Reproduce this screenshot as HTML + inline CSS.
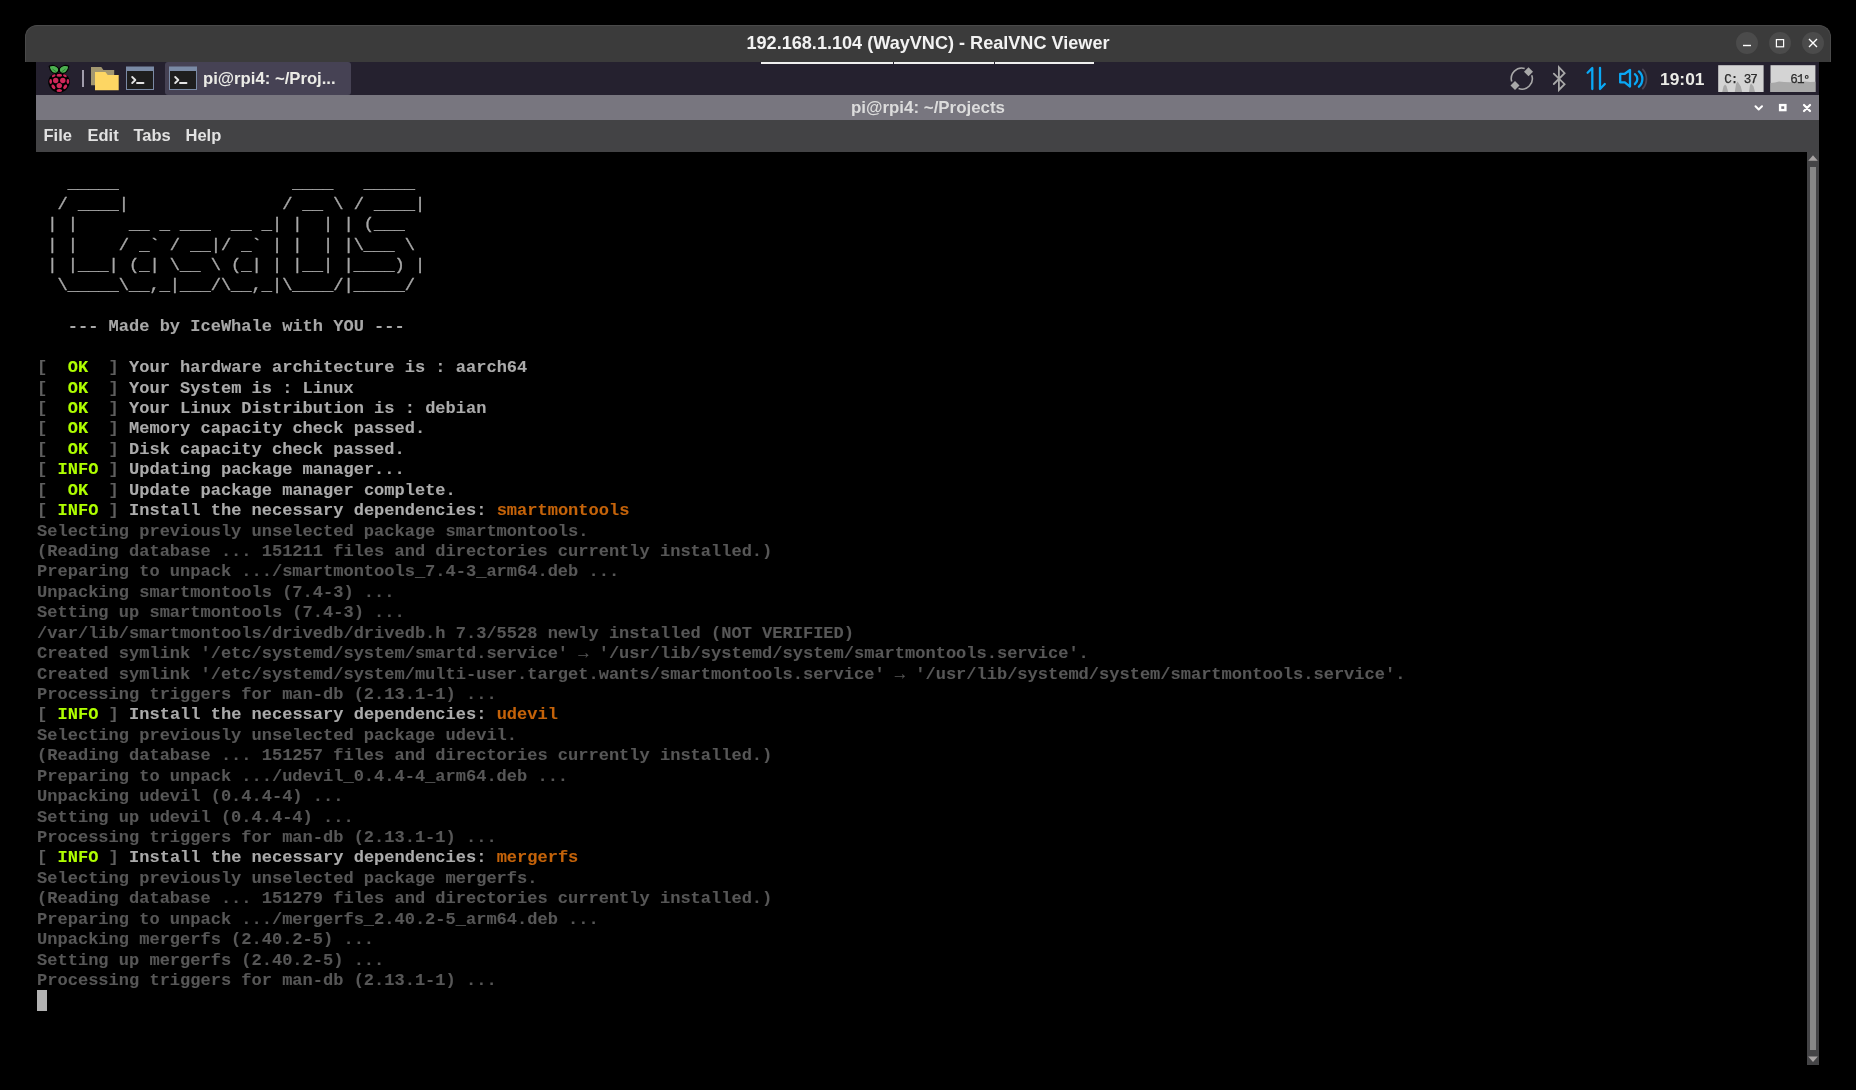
<!DOCTYPE html>
<html>
<head>
<meta charset="utf-8">
<style>
html,body{margin:0;padding:0;background:#000;}
body{width:1856px;height:1090px;overflow:hidden;position:relative;will-change:transform;font-family:"Liberation Sans",sans-serif;}
.abs{position:absolute;}
#vnctitle{left:25px;top:25px;width:1806px;height:37px;background:#3b3b3b;border-radius:12px 12px 0 0;box-sizing:border-box;border:1px solid #4a4a4a;border-bottom:none;}
#vnctext{left:0;width:1856px;top:32px;text-align:center;color:#f2f2f2;font-weight:bold;font-size:18.1px;line-height:22px;white-space:pre;}
.wbtn{width:22px;height:22px;border-radius:50%;background:#4b4b4b;top:32px;}
.ind{top:62px;height:2px;background:#f0f0f0;}
#panel{left:36px;top:62px;width:1783px;height:33px;background:#25212f;}
#ttitle{left:36px;top:95px;width:1783px;height:25px;background:#78767f;}
#ttext{left:0;width:1856px;top:97px;text-align:center;color:#dcdcdc;font-weight:bold;font-size:16.9px;line-height:22px;white-space:pre;}
#menubar{left:36px;top:120px;width:1783px;height:32px;background:#434345;}
.menu{top:124px;color:#e2e2e2;font-weight:bold;font-size:16.5px;line-height:22px;}
#term{left:36px;top:152px;width:1771px;height:913px;background:#000;}
.r{position:absolute;left:37.1px;font-family:"Liberation Mono",monospace;font-size:17.02px;line-height:20.43px;height:20.43px;white-space:pre;}
#sb{left:1807px;top:152px;width:12px;height:913px;background:#444446;}
#thumb{left:1809.6px;top:166.6px;width:6.8px;height:883.4px;background:#878787;}
#task{left:165px;top:62px;width:186px;height:33px;background:#464254;border-radius:3px;}
#tasktext{left:203px;top:68px;color:#ebebe6;font-weight:bold;font-size:16.7px;line-height:22px;white-space:pre;}
#clock{left:1660px;top:68px;color:#ebebe6;font-weight:bold;font-size:17.4px;line-height:22px;white-space:pre;}
.mon{top:65px;height:27px;width:45px;background:#d4d4d4;overflow:hidden;}
.montext{font-family:"Liberation Mono",monospace;font-size:13px;color:#2a2a2a;line-height:14px;white-space:pre;}
</style>
</head>
<body>
<!-- VNC viewer title bar -->
<div id="vnctitle" class="abs"></div>
<div id="vnctext" class="abs">192.168.1.104 (WayVNC) - RealVNC Viewer</div>
<div class="abs wbtn" style="left:1736px"></div>
<div class="abs wbtn" style="left:1769px"></div>
<div class="abs wbtn" style="left:1802px"></div>
<svg class="abs" style="left:1720px;top:25px" width="110" height="37" viewBox="0 0 110 37">
  <line x1="23" y1="20.5" x2="31" y2="20.5" stroke="#fff" stroke-width="1.4"/>
  <rect x="56.4" y="14.6" width="7.2" height="7.2" fill="none" stroke="#fff" stroke-width="1.2"/>
  <path d="M89 14 L97 22 M97 14 L89 22" stroke="#fff" stroke-width="1.4"/>
</svg>

<!-- Panel -->
<div id="panel" class="abs"></div>
<div id="task" class="abs"></div>
<div id="tasktext" class="abs">pi@rpi4: ~/Proj...</div>
<div id="clock" class="abs">19:01</div>
<svg class="abs" style="left:1718px;top:65px" width="46" height="27" viewBox="1718 65 46 27">
  <rect x="1718.2" y="65.2" width="45.4" height="26.8" fill="#d4d4d4"/>
  <path d="M1722.2 92 L1723.5 86.5 L1725 84.6 L1726.5 86 L1728.2 92 Z" fill="#a9a9a9"/>
  <path d="M1734.8 92 L1736 84 L1737.6 81.5 L1739.5 84.5 L1740.8 86.5 L1742.2 92 Z" fill="#a9a9a9"/>
  <path d="M1749 92 L1750 85 L1751.2 83.5 L1753.5 86.5 L1755 92 Z" fill="#a9a9a9"/>
  <text x="1724.3" y="82.9" font-family="Liberation Mono" font-size="12.6" letter-spacing="-1.05" fill="#2b2b2b" stroke="#2b2b2b" stroke-width="0.25" xml:space="preserve">C: 37</text>
</svg>
<svg class="abs" style="left:1770px;top:65px" width="46" height="27" viewBox="1770 65 46 27">
  <rect x="1770.5" y="65.2" width="44.9" height="26.8" fill="#d4d4d4"/>
  <path d="M1770.4 92 L1770.4 83 L1775 82.4 L1779 81.6 L1784 81.9 L1790 82.3 L1795 81.5 L1797 80.4 L1799 82 L1805 81.6 L1810 82.1 L1815.4 81.8 L1815.4 92 Z" fill="#a9a9a9"/>
  <text x="1790.3" y="82.9" font-family="Liberation Mono" font-size="12.6" letter-spacing="-0.8" fill="#2b2b2b" stroke="#2b2b2b" stroke-width="0.25" xml:space="preserve">61</text><circle cx="1806.7" cy="76.9" r="1.4" fill="none" stroke="#2b2b2b" stroke-width="1.1"/>
</svg>

<div class="abs ind" style="left:761px;width:132px"></div>
<div class="abs ind" style="left:894px;width:100px"></div>
<div class="abs ind" style="left:995px;width:99px"></div>

<!-- Terminal title -->
<div id="ttitle" class="abs"></div>
<div id="ttext" class="abs">pi@rpi4: ~/Projects</div>

<!-- Menubar -->
<div id="menubar" class="abs"></div>
<div class="abs menu" style="left:43.5px">File</div>
<div class="abs menu" style="left:87.5px">Edit</div>
<div class="abs menu" style="left:133.5px">Tabs</div>
<div class="abs menu" style="left:185.5px">Help</div>

<!-- Terminal -->
<div id="term" class="abs"></div>
<div class="r" style="top:174.23px"><span style="color:#a8a8a8;-webkit-text-stroke:0.4px">   _____                 ____   _____ </span></div>
<div class="r" style="top:194.66px"><span style="color:#a8a8a8;-webkit-text-stroke:0.4px">  / ____|               / __ \ / ____|</span></div>
<div class="r" style="top:215.09px"><span style="color:#a8a8a8;-webkit-text-stroke:0.4px"> | |     __ _ ___  __ _| |  | | (___  </span></div>
<div class="r" style="top:235.52px"><span style="color:#a8a8a8;-webkit-text-stroke:0.4px"> | |    / _` / __|/ _` | |  | |\___ \ </span></div>
<div class="r" style="top:255.95px"><span style="color:#a8a8a8;-webkit-text-stroke:0.4px"> | |___| (_| \__ \ (_| | |__| |____) |</span></div>
<div class="r" style="top:276.38px"><span style="color:#a8a8a8;-webkit-text-stroke:0.4px">  \_____\__,_|___/\__,_|\____/|_____/ </span></div>
<div class="r" style="top:317.24px"><span style="color:#a8a8a8;font-weight:bold;-webkit-text-stroke:0.1px">   --- Made by IceWhale with YOU ---</span></div>
<div class="r" style="top:358.10px"><span style="color:#5f5f5f;font-weight:bold;-webkit-text-stroke:0.1px">[</span><span style="color:#afff00;font-weight:bold;-webkit-text-stroke:0.1px">  OK  </span><span style="color:#5f5f5f;font-weight:bold;-webkit-text-stroke:0.1px">] </span><span style="color:#ababab;font-weight:bold;-webkit-text-stroke:0.1px">Your hardware architecture is : aarch64</span></div>
<div class="r" style="top:378.53px"><span style="color:#5f5f5f;font-weight:bold;-webkit-text-stroke:0.1px">[</span><span style="color:#afff00;font-weight:bold;-webkit-text-stroke:0.1px">  OK  </span><span style="color:#5f5f5f;font-weight:bold;-webkit-text-stroke:0.1px">] </span><span style="color:#ababab;font-weight:bold;-webkit-text-stroke:0.1px">Your System is : Linux</span></div>
<div class="r" style="top:398.96px"><span style="color:#5f5f5f;font-weight:bold;-webkit-text-stroke:0.1px">[</span><span style="color:#afff00;font-weight:bold;-webkit-text-stroke:0.1px">  OK  </span><span style="color:#5f5f5f;font-weight:bold;-webkit-text-stroke:0.1px">] </span><span style="color:#ababab;font-weight:bold;-webkit-text-stroke:0.1px">Your Linux Distribution is : debian</span></div>
<div class="r" style="top:419.39px"><span style="color:#5f5f5f;font-weight:bold;-webkit-text-stroke:0.1px">[</span><span style="color:#afff00;font-weight:bold;-webkit-text-stroke:0.1px">  OK  </span><span style="color:#5f5f5f;font-weight:bold;-webkit-text-stroke:0.1px">] </span><span style="color:#ababab;font-weight:bold;-webkit-text-stroke:0.1px">Memory capacity check passed.</span></div>
<div class="r" style="top:439.82px"><span style="color:#5f5f5f;font-weight:bold;-webkit-text-stroke:0.1px">[</span><span style="color:#afff00;font-weight:bold;-webkit-text-stroke:0.1px">  OK  </span><span style="color:#5f5f5f;font-weight:bold;-webkit-text-stroke:0.1px">] </span><span style="color:#ababab;font-weight:bold;-webkit-text-stroke:0.1px">Disk capacity check passed.</span></div>
<div class="r" style="top:460.25px"><span style="color:#5f5f5f;font-weight:bold;-webkit-text-stroke:0.1px">[</span><span style="color:#afff00;font-weight:bold;-webkit-text-stroke:0.1px"> INFO </span><span style="color:#5f5f5f;font-weight:bold;-webkit-text-stroke:0.1px">] </span><span style="color:#ababab;font-weight:bold;-webkit-text-stroke:0.1px">Updating package manager...</span></div>
<div class="r" style="top:480.68px"><span style="color:#5f5f5f;font-weight:bold;-webkit-text-stroke:0.1px">[</span><span style="color:#afff00;font-weight:bold;-webkit-text-stroke:0.1px">  OK  </span><span style="color:#5f5f5f;font-weight:bold;-webkit-text-stroke:0.1px">] </span><span style="color:#ababab;font-weight:bold;-webkit-text-stroke:0.1px">Update package manager complete.</span></div>
<div class="r" style="top:501.11px"><span style="color:#5f5f5f;font-weight:bold;-webkit-text-stroke:0.1px">[</span><span style="color:#afff00;font-weight:bold;-webkit-text-stroke:0.1px"> INFO </span><span style="color:#5f5f5f;font-weight:bold;-webkit-text-stroke:0.1px">] </span><span style="color:#ababab;font-weight:bold;-webkit-text-stroke:0.1px">Install the necessary dependencies: </span><span style="color:#c4630a;font-weight:bold;-webkit-text-stroke:0.1px">smartmontools</span></div>
<div class="r" style="top:521.54px"><span style="color:#575757;font-weight:bold;-webkit-text-stroke:0.1px">Selecting previously unselected package smartmontools.</span></div>
<div class="r" style="top:541.97px"><span style="color:#575757;font-weight:bold;-webkit-text-stroke:0.1px">(Reading database ... 151211 files and directories currently installed.)</span></div>
<div class="r" style="top:562.40px"><span style="color:#575757;font-weight:bold;-webkit-text-stroke:0.1px">Preparing to unpack .../smartmontools_7.4-3_arm64.deb ...</span></div>
<div class="r" style="top:582.83px"><span style="color:#575757;font-weight:bold;-webkit-text-stroke:0.1px">Unpacking smartmontools (7.4-3) ...</span></div>
<div class="r" style="top:603.26px"><span style="color:#575757;font-weight:bold;-webkit-text-stroke:0.1px">Setting up smartmontools (7.4-3) ...</span></div>
<div class="r" style="top:623.69px"><span style="color:#575757;font-weight:bold;-webkit-text-stroke:0.1px">/var/lib/smartmontools/drivedb/drivedb.h 7.3/5528 newly installed (NOT VERIFIED)</span></div>
<div class="r" style="top:644.12px"><span style="color:#575757;font-weight:bold;-webkit-text-stroke:0.1px">Created symlink &#x27;/etc/systemd/system/smartd.service&#x27; → &#x27;/usr/lib/systemd/system/smartmontools.service&#x27;.</span></div>
<div class="r" style="top:664.55px"><span style="color:#575757;font-weight:bold;-webkit-text-stroke:0.1px">Created symlink &#x27;/etc/systemd/system/multi-user.target.wants/smartmontools.service&#x27; → &#x27;/usr/lib/systemd/system/smartmontools.service&#x27;.</span></div>
<div class="r" style="top:684.98px"><span style="color:#575757;font-weight:bold;-webkit-text-stroke:0.1px">Processing triggers for man-db (2.13.1-1) ...</span></div>
<div class="r" style="top:705.41px"><span style="color:#5f5f5f;font-weight:bold;-webkit-text-stroke:0.1px">[</span><span style="color:#afff00;font-weight:bold;-webkit-text-stroke:0.1px"> INFO </span><span style="color:#5f5f5f;font-weight:bold;-webkit-text-stroke:0.1px">] </span><span style="color:#ababab;font-weight:bold;-webkit-text-stroke:0.1px">Install the necessary dependencies: </span><span style="color:#c4630a;font-weight:bold;-webkit-text-stroke:0.1px">udevil</span></div>
<div class="r" style="top:725.84px"><span style="color:#575757;font-weight:bold;-webkit-text-stroke:0.1px">Selecting previously unselected package udevil.</span></div>
<div class="r" style="top:746.27px"><span style="color:#575757;font-weight:bold;-webkit-text-stroke:0.1px">(Reading database ... 151257 files and directories currently installed.)</span></div>
<div class="r" style="top:766.70px"><span style="color:#575757;font-weight:bold;-webkit-text-stroke:0.1px">Preparing to unpack .../udevil_0.4.4-4_arm64.deb ...</span></div>
<div class="r" style="top:787.13px"><span style="color:#575757;font-weight:bold;-webkit-text-stroke:0.1px">Unpacking udevil (0.4.4-4) ...</span></div>
<div class="r" style="top:807.56px"><span style="color:#575757;font-weight:bold;-webkit-text-stroke:0.1px">Setting up udevil (0.4.4-4) ...</span></div>
<div class="r" style="top:827.99px"><span style="color:#575757;font-weight:bold;-webkit-text-stroke:0.1px">Processing triggers for man-db (2.13.1-1) ...</span></div>
<div class="r" style="top:848.42px"><span style="color:#5f5f5f;font-weight:bold;-webkit-text-stroke:0.1px">[</span><span style="color:#afff00;font-weight:bold;-webkit-text-stroke:0.1px"> INFO </span><span style="color:#5f5f5f;font-weight:bold;-webkit-text-stroke:0.1px">] </span><span style="color:#ababab;font-weight:bold;-webkit-text-stroke:0.1px">Install the necessary dependencies: </span><span style="color:#c4630a;font-weight:bold;-webkit-text-stroke:0.1px">mergerfs</span></div>
<div class="r" style="top:868.85px"><span style="color:#575757;font-weight:bold;-webkit-text-stroke:0.1px">Selecting previously unselected package mergerfs.</span></div>
<div class="r" style="top:889.28px"><span style="color:#575757;font-weight:bold;-webkit-text-stroke:0.1px">(Reading database ... 151279 files and directories currently installed.)</span></div>
<div class="r" style="top:909.71px"><span style="color:#575757;font-weight:bold;-webkit-text-stroke:0.1px">Preparing to unpack .../mergerfs_2.40.2-5_arm64.deb ...</span></div>
<div class="r" style="top:930.14px"><span style="color:#575757;font-weight:bold;-webkit-text-stroke:0.1px">Unpacking mergerfs (2.40.2-5) ...</span></div>
<div class="r" style="top:950.57px"><span style="color:#575757;font-weight:bold;-webkit-text-stroke:0.1px">Setting up mergerfs (2.40.2-5) ...</span></div>
<div class="r" style="top:971.00px"><span style="color:#575757;font-weight:bold;-webkit-text-stroke:0.1px">Processing triggers for man-db (2.13.1-1) ...</span></div>
<div class="abs" style="left:37.2px;top:990.23px;width:10px;height:20.4px;background:#b2b2b2"></div>

<!-- Scrollbar -->
<div id="sb" class="abs"></div>
<div id="thumb" class="abs"></div>

<!-- raspberry -->
<svg class="abs" style="left:44px;top:62px" width="30" height="33" viewBox="0 0 30 33">
  <path d="M5.2 4.2 C8 2.6 12.5 3.2 14.6 6.5 C15 8.5 14 10.6 12 11.3 C9 11.8 5.8 9.5 5.2 4.2 Z" fill="#4cb050" stroke="#000" stroke-width="1.1"/>
  <path d="M24.8 4.2 C22 2.6 17.5 3.2 15.4 6.5 C15 8.5 16 10.6 18 11.3 C21 11.8 24.2 9.5 24.8 4.2 Z" fill="#4cb050" stroke="#000" stroke-width="1.1"/>
  <path d="M8.5 7 L12.5 10 M21.5 7 L17.5 10" stroke="#2a6a2e" stroke-width="0.8"/>
  <path d="M15 11 C21 11 25.5 14.5 25.8 19.5 C26 24.5 21.5 30.5 15 30.8 C8.5 30.5 4 24.5 4.2 19.5 C4.5 14.5 9 11 15 11 Z" fill="#000"/>
  <g fill="#d0285a">
    <ellipse cx="15.3" cy="13.3" rx="2.8" ry="1.5"/>
    <ellipse cx="9.7" cy="13.8" rx="2" ry="1.2" transform="rotate(-30 9.7 13.8)"/>
    <ellipse cx="20.9" cy="13.8" rx="2" ry="1.2" transform="rotate(30 20.9 13.8)"/>
    <circle cx="11.7" cy="18.5" r="2.7"/>
    <circle cx="18.8" cy="18.5" r="2.7"/>
    <ellipse cx="6.7" cy="19.5" rx="1.3" ry="2.4"/>
    <ellipse cx="23.9" cy="19.5" rx="1.3" ry="2.4"/>
    <circle cx="15.3" cy="23.6" r="2.7"/>
    <ellipse cx="9.4" cy="24.8" rx="1.6" ry="2.6" transform="rotate(-35 9.4 24.8)"/>
    <ellipse cx="21.2" cy="24.8" rx="1.6" ry="2.6" transform="rotate(35 21.2 24.8)"/>
    <ellipse cx="15.3" cy="28.6" rx="2.8" ry="1.5"/>
  </g>
</svg>
<!-- separator -->
<div class="abs" style="left:82px;top:70px;width:1.8px;height:17px;background:#a09cab"></div>
<!-- folder -->
<svg class="abs" style="left:88px;top:62px" width="34" height="33" viewBox="88 62 34 33">
  <path d="M91 67 L101.3 67 L103.4 70 L114.2 70 L114.2 85.3 L91 85.3 Z" fill="#a39770"/>
  <path d="M95 72.1 L105.4 72.1 L107.7 74.9 L118.7 74.9 L118.7 90.2 L95 90.2 Z" fill="#fdd663"/>
</svg>
<!-- terminal launcher -->
<svg class="abs" style="left:124px;top:62px" width="34" height="33" viewBox="124 62 34 33">
  <rect x="126" y="66.5" width="28" height="23.5" fill="#7a8aa5"/>
  <rect x="127" y="71" width="26" height="18" fill="#1e1e1e"/>
  <path d="M132.2 77 L135.3 80 L132.2 83" fill="none" stroke="#e4e4e4" stroke-width="1.9" stroke-linecap="round" stroke-linejoin="round"/>
  <path d="M137 83 L143.5 83" stroke="#e4e4e4" stroke-width="1.9" stroke-linecap="round"/>
</svg>
<!-- task terminal icon -->
<svg class="abs" style="left:166.8px;top:62.4px" width="34" height="33" viewBox="124 62 34 33">
  <rect x="126" y="66.5" width="28" height="23.5" fill="#7a8aa5"/>
  <rect x="127" y="71" width="26" height="18" fill="#1e1e1e"/>
  <path d="M132.2 77 L135.3 80 L132.2 83" fill="none" stroke="#e4e4e4" stroke-width="1.9" stroke-linecap="round" stroke-linejoin="round"/>
  <path d="M137 83 L143.5 83" stroke="#e4e4e4" stroke-width="1.9" stroke-linecap="round"/>
</svg>
<!-- tray -->
<svg class="abs" style="left:1500px;top:62px" width="160" height="33" viewBox="1500 62 160 33">
  <g stroke="#a8a8a8" stroke-width="1.6" fill="none">
    <path d="M1511.71 81.49 A10.5 10.5 0 0 1 1524.69 68.51"/>
    <path d="M1531.73 75.18 A10.5 10.5 0 0 1 1518.56 88.59"/>
  </g>
  <path d="M1528.5 67.3 L1533 71.8 L1528.5 76.3 L1524 71.8 Z" fill="#a8a8a8"/>
  <path d="M1515 81 L1519.5 85.5 L1515 90 L1510.5 85.5 Z" fill="#a8a8a8"/>
  <path d="M1553.8 73.6 L1564.6 84.2 L1558.9 90 L1558.9 67.2 L1564.6 73.2 L1553.8 84" fill="none" stroke="#a8a8a8" stroke-width="1.8" stroke-linejoin="miter" stroke-miterlimit="3" stroke-linecap="round"/>
  <g stroke="#0aa8f5" stroke-width="2.3" fill="none" stroke-linecap="round" stroke-linejoin="round">
    <path d="M1587.6 72.8 L1592.3 68 L1592.3 89"/>
    <path d="M1600 67.8 L1600 89 L1604.8 84"/>
    <path d="M1620.2 73.8 L1624.8 73.8 L1630 70 L1630 86.6 L1624.8 82.4 L1620.2 82.4 Z"/>
    <path d="M1634.9 74.2 A6.1 6.1 0 0 1 1634.9 84"/>
    <path d="M1638.9 71.4 A10.2 10.2 0 0 1 1638.9 86.7"/>
  </g>
  <path d="M1642.8 69.4 A14.5 14.5 0 0 1 1642.8 88.6" fill="none" stroke="#4a4655" stroke-width="1.8" stroke-linecap="round"/>
</svg>
<!-- terminal title buttons -->
<svg class="abs" style="left:1745px;top:95px" width="75" height="25" viewBox="1745 95 75 25">
  <path d="M1755.5 106.3 L1758.7 109.5 L1762 106.3" fill="none" stroke="#fff" stroke-width="2" stroke-linecap="round" stroke-linejoin="round"/>
  <rect x="1780.1" y="105.1" width="5.3" height="5" fill="none" stroke="#fff" stroke-width="2.4"/>
  <path d="M1804 105 L1810 111 M1810 105 L1804 111" stroke="#fff" stroke-width="2.2" stroke-linecap="round"/>
</svg>
<!-- scrollbar arrows -->
<svg class="abs" style="left:1807px;top:152px" width="12" height="913" viewBox="0 0 12 913">
  <path d="M1.2 8.8 L6 3.2 L10.8 8.8 Z" fill="#a7a3a3"/>
  <path d="M1.2 904.4 L6 910 L10.8 904.4 Z" fill="#a7a3a3"/>
</svg>

</body>
</html>
